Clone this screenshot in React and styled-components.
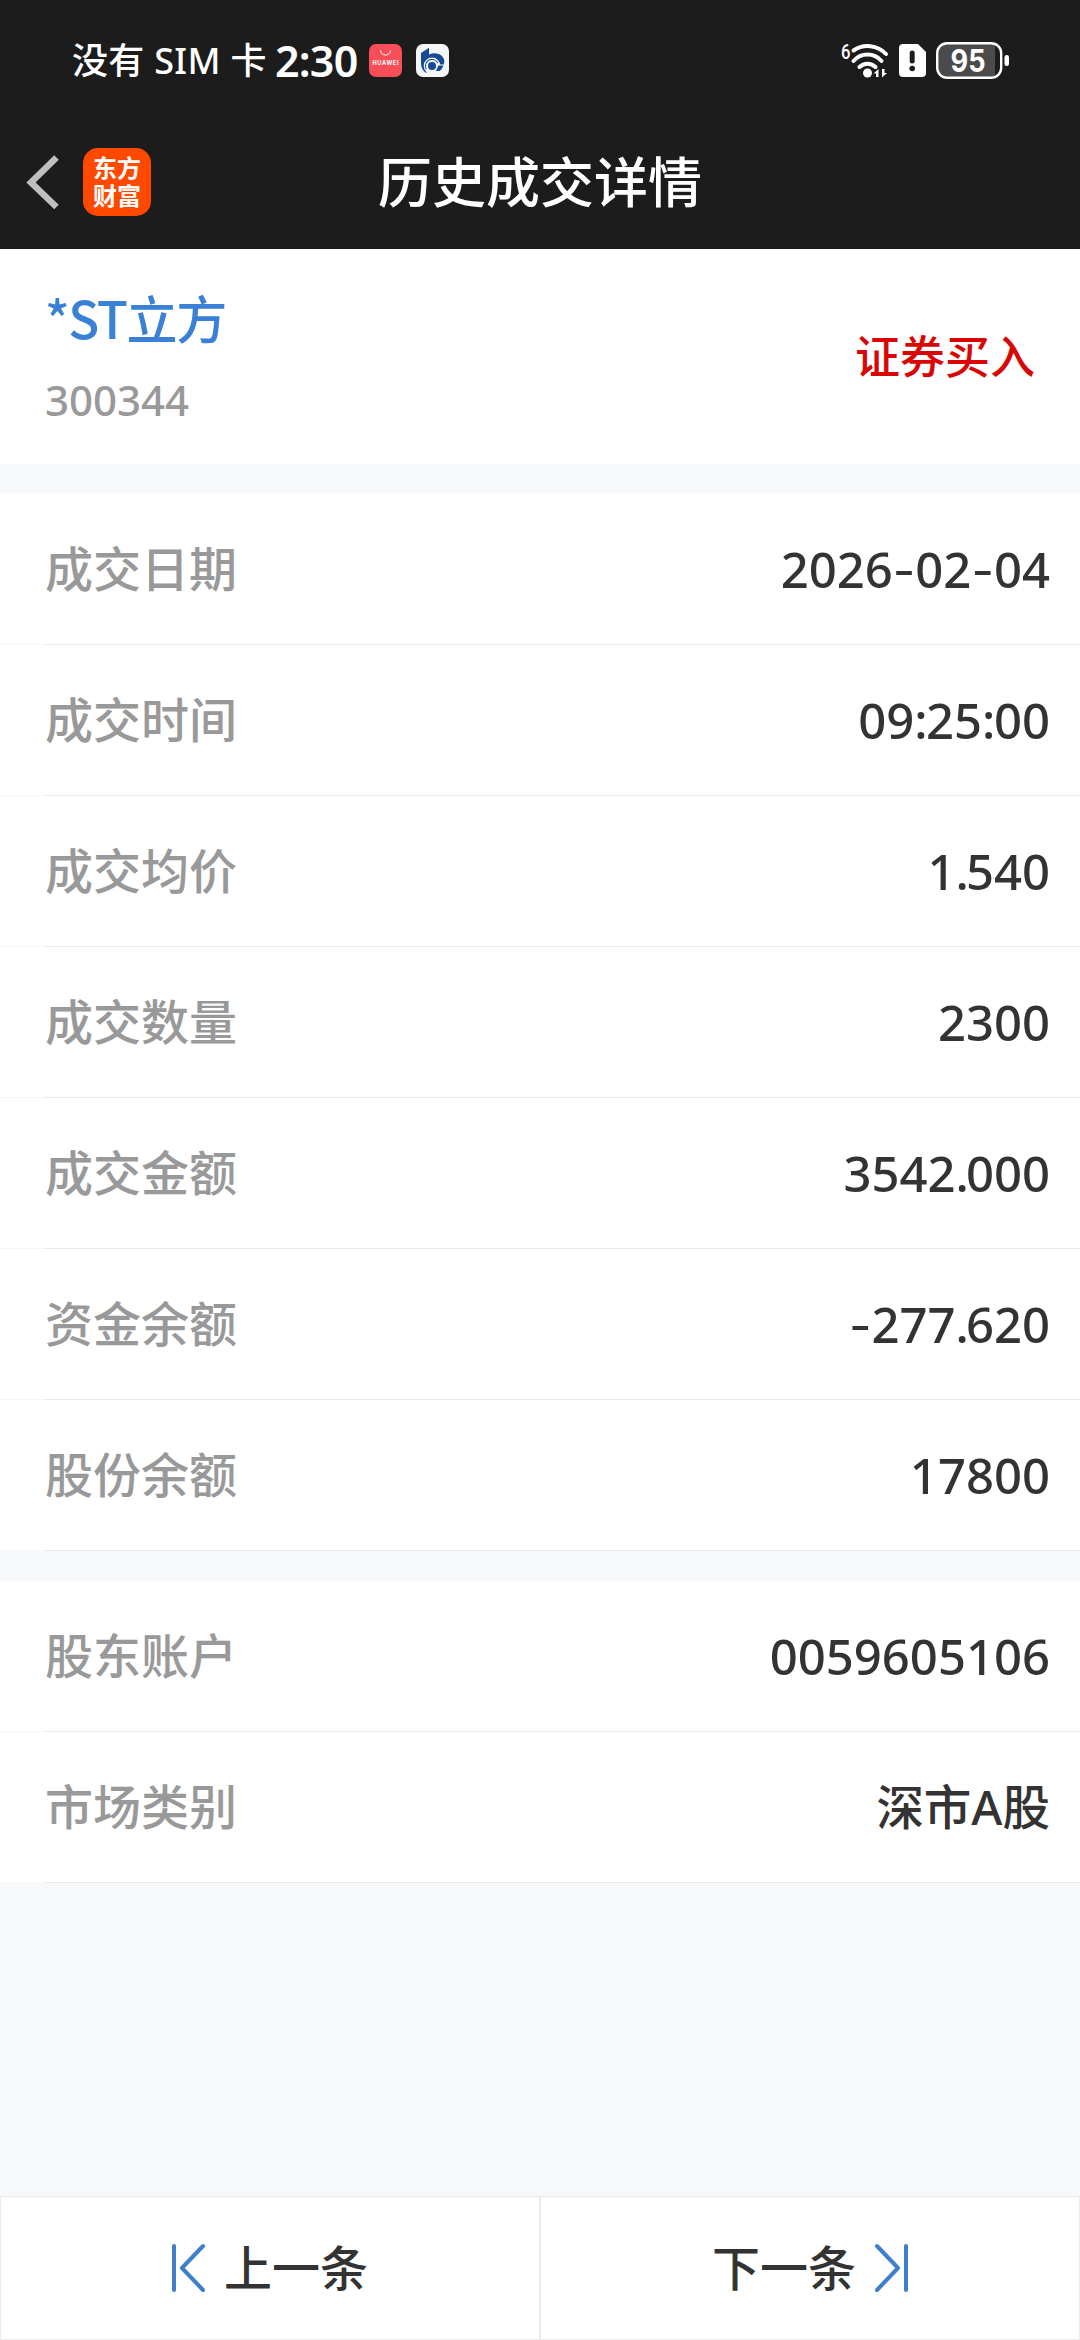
import styled, { createGlobalStyle } from 'styled-components';

const GlobalStyle = createGlobalStyle`
* {
	box-sizing: border-box;
}

body {
	margin: 0;
	background-color: #f6f8fa;
	font-family: 'Noto Sans', 'Noto Sans CJK SC', sans-serif;
}

svg {
	overflow: visible;
}
`;

const Page = styled.div`
	width: 1080px;
	height: 2340px;
	display: flex;
	flex-direction: column;
	background-color: #f6f8fa;
	color: #333;
`;

const StatusBar = styled.div`
	height: 115px;
	padding: 6px 70px 0 72px;
	display: flex;
	align-items: center;
	background-color: #1c1c1c;
	color: #fff;
	white-space: nowrap;
`;

const Carrier = styled.span`
	width: 203px;
	font-size: 36px;
	font-weight: 500;
	letter-spacing: 0.3px;
	line-height: 50px;
`;

const Clock = styled.span`
	width: 94px;
	font-size: 43px;
	font-weight: 600;
	letter-spacing: -0.8px;
	line-height: 50px;
`;

const AppIcon = styled.svg`
	width: 33px;
	height: 33px;
	margin-right: 14px;
`;

const StatusIcons = styled.div`
	display: flex;
	align-items: center;
	gap: 10px;
	margin-left: auto;
`;

const NavBar = styled.div`
	height: 134px;
	display: grid;
	grid-template-columns: 240px 1fr 240px;
	align-items: center;
	background-color: #1c1c1c;
	color: #fff;
`;

const NavLeft = styled.div`
	display: flex;
	align-items: center;
	gap: 24px;
	padding-left: 26px;
`;

const Logo = styled.div`
	width: 68px;
	height: 68px;
	padding: 5px 9px 0 10px;
	border-radius: 15px;
	background-color: #ff4800;
	font-family: 'Noto Sans CJK SC', sans-serif;
	font-size: 24px;
	font-weight: 700;
	line-height: 28px;
`;

const Title = styled.h1`
	margin: 0;
	text-align: center;
	font-size: 54px;
	font-weight: 500;
	line-height: 70px;
`;

const Stock = styled.div`
	height: 215px;
	padding: 0 45px;
	display: flex;
	align-items: center;
	justify-content: space-between;
	background-color: #fff;
`;

const StockName = styled.div`
	font-family: 'Noto Sans CJK SC', sans-serif;
	font-size: 51px;
	font-weight: 500;
	letter-spacing: -1.4px;
	line-height: 66px;
	color: #3a80d6;
`;

const StockCode = styled.div`
	margin-top: 20px;
	font-size: 42px;
	font-weight: 500;
	line-height: 60px;
	color: #999;
`;

const Direction = styled.div`
	font-size: 45px;
	font-weight: 500;
	line-height: 60px;
	color: #d90606;
`;

const Group = styled.div`
	margin-top: 30px;
`;

const Row = styled.div`
	height: 151px;
	padding: 0 30px 0 45px;
	display: flex;
	align-items: center;
	justify-content: space-between;
	border-bottom: 1px solid;
	border-image: linear-gradient(to right, #f7f7f7 45px, #ebebeb 45px) 1;
	background-color: #fff;
	line-height: 70px;
`;

const Label = styled.span`
	font-size: 48px;
	font-weight: 500;
	color: #999;
`;

const Value = styled.span`
	font-size: ${({ $text }) => ($text ? '47.5px' : '49px')};
	font-weight: 500;
`;

const Dash = styled.span`
	font-family: Inter, sans-serif;
	font-weight: 400;
	line-height: 0;
`;

const Point = styled.span`
	letter-spacing: ${({ $char }) => ($char === '.' ? '-3px' : '-1.5px')};
`;

const Footer = styled.div`
	height: 144px;
	margin-top: auto;
	display: grid;
	grid-template-columns: 1fr 1fr;
`;

const PageButton = styled.button`
	display: flex;
	align-items: center;
	justify-content: center;
	gap: 19px;
	padding: 0;
	border: 1px solid #ebebeb;
	background-color: #fff;
	color: #333;
	font-family: inherit;
	font-size: 48px;
	font-weight: 500;
	line-height: 70px;
`;

const trade = [
	['成交日期', '2026-02-04'],
	['成交时间', '09:25:00'],
	['成交均价', '1.540'],
	['成交数量', '2300'],
	['成交金额', '3542.000'],
	['资金余额', '-277.620'],
	['股份余额', '17800'],
];

const account = [
	['股东账户', '0059605106'],
	['市场类别', '深市A股'],
];

const HuaweiIcon = () => (
	<AppIcon viewBox='0 0 33 33'>
		<rect width='33' height='33' rx='7' fill='#f84e57' />
		<path d='M11.5 6.5a5 4.5 0 0 0 10 0' fill='none' stroke='#fff' strokeWidth='1' />
		<text
			x='16.5'
			y='21'
			textAnchor='middle'
			textLength='26'
			fontFamily='Inter, sans-serif'
			fontSize='5.6'
			fontWeight='700'
			fill='#fff'
		>
			HUAWEI
		</text>
	</AppIcon>
);

const BankIcon = () => (
	<AppIcon viewBox='0 0 33 33'>
		<rect width='33' height='33' rx='7' fill='#f5f6f8' />
		<path
			d='M5 9L13 3.800v6.700c3-1.500 6-1.700 9-.8c4 1.200 6.500 4.500 6.300 8.300l-.6 2.500H16L10 29C6.500 26.500 5 23 5 19z'
			fill='#164a94'
		/>
		<circle cx='16' cy='21.800' r='8.300' fill='#f5f6f8' />
		<path d='M27.300 21.500c-.6 2.500-2 4.300-3.800 5.500h-3.500l2.500-5.500z' fill='#164a94' />
		<circle cx='16' cy='22' r='6.600' fill='none' stroke='#164a94' strokeWidth='1' strokeDasharray='21 41' transform='rotate(150 16 22)' />
		<circle cx='16' cy='22' r='4' fill='#164a94' />
	</AppIcon>
);

const WifiIcon = () => (
	<svg width='48' height='37' viewBox='0 0 48 37'>
		<text x='0' y='16.500' fontFamily='Roboto, sans-serif' fontSize='21' fontWeight='500' textLength='9.500' lengthAdjust='spacingAndGlyphs' fill='#fff'>
			6
		</text>
		<g fill='none' stroke='#fff' strokeWidth='4' strokeLinecap='round'>
			<path d='M12.500 8.500a25 25 0 0 1 32.500 3.500' />
			<path d='M12.500 19a18.500 18.500 0 0 1 28 0' />
			<path d='M18.500 25a11.500 11.500 0 0 1 16 0' />
		</g>
		<circle cx='26.500' cy='31' r='4.500' fill='#fff' />
		<path d='M32.500 31.500l5-4.500v8h-2.500v-3.500zM46 31l-5 4.500v-8.500h2.500v4z' fill='#fff' />
	</svg>
);

const SimIcon = () => (
	<svg width='27' height='33' viewBox='0 0 27 33'>
		<path
			d='M4 0h15l8 8v21a4 4 0 0 1-4 4H4a4 4 0 0 1-4-4V4a4 4 0 0 1 4-4z'
			fill='#fff'
		/>
		<path d='M13.200 9v8' stroke='#1c1c1c' strokeWidth='5' strokeLinecap='round' />
		<circle cx='13.200' cy='24.500' r='2.800' fill='#1c1c1c' />
	</svg>
);

const BatteryIcon = () => (
	<svg width='74' height='37' viewBox='0 0 74 37'>
		<path d='M12 2h47v33H12A10 10 0 0 1 2 25V12A10 10 0 0 1 12 2z' fill='#4b4b4b' />
		<rect x='1.200' y='1.200' width='64' height='34.600' rx='10' fill='none' stroke='#fff' strokeWidth='2.400' />
		<rect x='68.500' y='13' width='4.500' height='11' rx='2.200' fill='#fff' />
		<text x='32' y='29.500' textAnchor='middle' fontFamily='Inter, sans-serif' fontSize='31' fontWeight='700' textLength='35' lengthAdjust='spacingAndGlyphs' fill='#fff'>
			95
		</text>
	</svg>
);

const BackIcon = () => (
	<svg width='33' height='56' viewBox='0 0 33 56'>
		<path
			d='M30.500 3.500L5 28.500l25.500 24.500'
			fill='none'
			stroke='#bfbfbf'
			strokeWidth='6.500'
		/>
	</svg>
);

const FirstIcon = ({ flip }) => (
	<svg
		width='33'
		height='48'
		viewBox='0 0 33 48'
		transform={flip ? 'scale(-1 1)' : undefined}
		fill='none'
		stroke='#3f80cd'
		strokeWidth='4'
		strokeLinecap='round'
		strokeLinejoin='round'
	>
		<path d='M2 2v44M31 2L10 24l21 22' />
	</svg>
);

// the punctuation is spaced differently from the digits
const formatValue = value =>
	value.split(/([-.:])/).map((part, i) => {
		if (part === '-') return <Dash key={i}>-</Dash>;
		if (part === '.' || part === ':') {
			return <Point key={i} $char={part}>{part}</Point>;
		}
		return part;
	});

const Rows = ({ items }) => (
	<Group>
		{items.map(([label, value]) => (
			<Row key={label}>
				<Label>{label}</Label>
				<Value $text={value.includes('股')}>{formatValue(value)}</Value>
			</Row>
		))}
	</Group>
);

export default function App() {
	return (
		<>
			<GlobalStyle />
			<Page>
				<StatusBar>
					<Carrier>没有 SIM 卡</Carrier>
					<Clock>2:30</Clock>
					<HuaweiIcon />
					<BankIcon />
					<StatusIcons>
						<WifiIcon />
						<SimIcon />
						<BatteryIcon />
					</StatusIcons>
				</StatusBar>
				<NavBar>
					<NavLeft>
						<BackIcon />
						<Logo>东方财富</Logo>
					</NavLeft>
					<Title>历史成交详情</Title>
				</NavBar>
				<Stock>
					<div>
						<StockName>*ST立方</StockName>
						<StockCode>300344</StockCode>
					</div>
					<Direction>证券买入</Direction>
				</Stock>
				<Rows items={trade} />
				<Rows items={account} />
				<Footer>
					<PageButton>
						<FirstIcon />
						上一条
					</PageButton>
					<PageButton>
						下一条
						<FirstIcon flip />
					</PageButton>
				</Footer>
			</Page>
		</>
	);
}
